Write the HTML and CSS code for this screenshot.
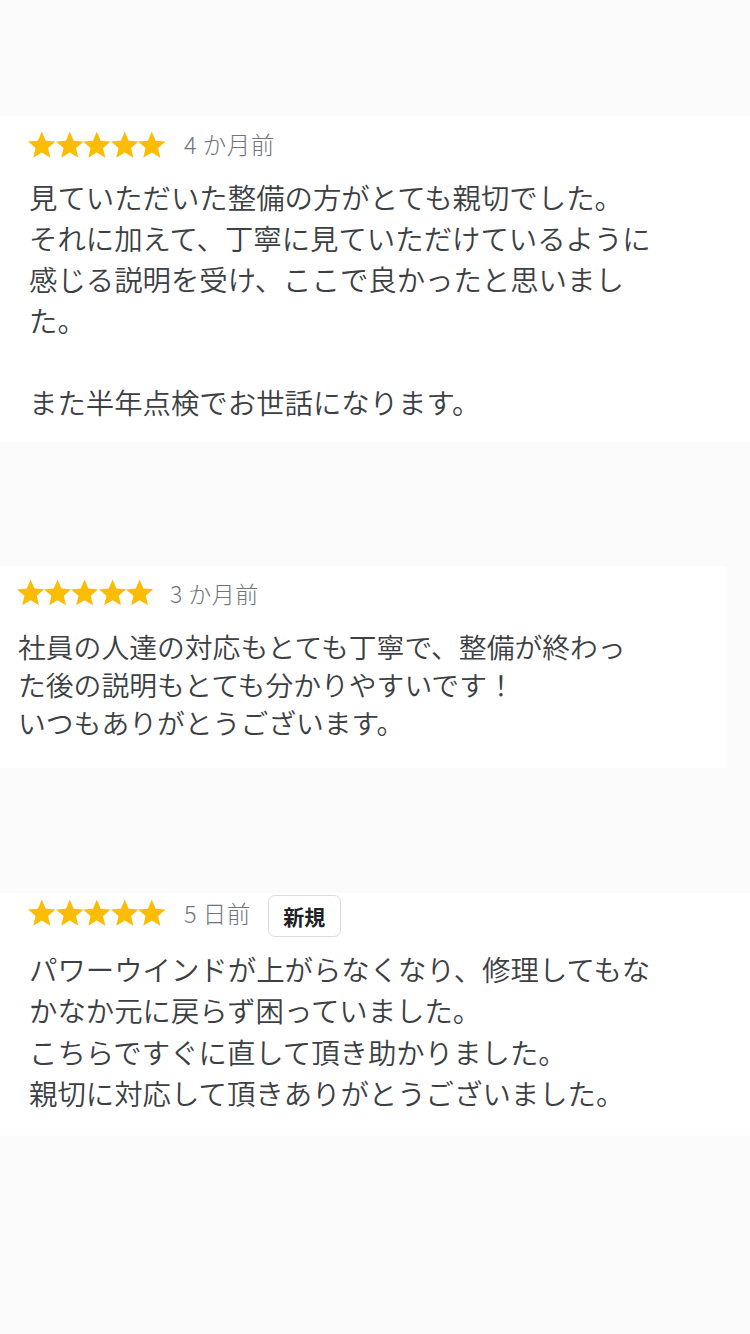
FILE: index.html
```html
<!DOCTYPE html>
<html lang="ja">
<head>
<meta charset="utf-8">
<link rel="stylesheet" href="styles.css">
</head>
<body>
<svg width="0" height="0" class="defs">
  <defs>
    <symbol id="star" viewBox="2 1.6 20 20"><path d="M12 17.27L18.18 21l-1.64-7.03L22 9.24l-7.19-.61L12 2 9.19 8.63 2 9.24l5.46 4.73L5.82 21z"/></symbol>
  </defs>
</svg>
<main class="page">
  <section class="card card-1">
    <div class="head">
      <div class="stars">
        <svg><use href="#star"/></svg><svg><use href="#star"/></svg><svg><use href="#star"/></svg><svg><use href="#star"/></svg><svg><use href="#star"/></svg>
      </div>
      <span class="date">4 か月前</span>
    </div>
    <p class="body">見ていただいた整備の方がとても親切でした。<br>それに加えて、丁寧に見ていただけているように<br>感じる説明を受け、ここで良かったと思いまし<br>た。<br><br>また半年点検でお世話になります。</p>
  </section>

  <section class="card card-2">
    <div class="head">
      <div class="stars">
        <svg><use href="#star"/></svg><svg><use href="#star"/></svg><svg><use href="#star"/></svg><svg><use href="#star"/></svg><svg><use href="#star"/></svg>
      </div>
      <span class="date">3 か月前</span>
    </div>
    <p class="body">社員の人達の対応もとても丁寧で、整備が終わっ<br>た後の説明もとても分かりやすいです！<br>いつもありがとうございます。</p>
  </section>

  <section class="card card-3">
    <div class="head">
      <div class="stars">
        <svg><use href="#star"/></svg><svg><use href="#star"/></svg><svg><use href="#star"/></svg><svg><use href="#star"/></svg><svg><use href="#star"/></svg>
      </div>
      <span class="date">5 日前</span>
      <span class="badge">新規</span>
    </div>
    <p class="body">パワーウインドが上がらなくなり、修理してもな<br>かなか元に戻らず困っていました。<br>こちらですぐに直して頂き助かりました。<br>親切に対応して頂きありがとうございました。</p>
  </section>
</main>
</body>
</html>
```

FILE: styles.css
```css
* { box-sizing: border-box; }

html, body {
  margin: 0;
  padding: 0;
  background: #fcfbfb;
}

body {
  width: 750px;
  height: 1334px;
  overflow: hidden;
  font-family: "Noto Sans CJK JP", "Noto Sans", "Liberation Sans", sans-serif;
  color: #3c4043;
}

.defs {
  position: absolute;
  width: 0;
  height: 0;
}

.page {
  display: flex;
  flex-direction: column;
  padding-top: 116px;
}

.card {
  background: #ffffff;
}

.head {
  display: flex;
  align-items: center;
  height: 30px;
}

.stars {
  display: flex;
  fill: #fbbc04;
}

.stars svg {
  width: 27.6px;
  height: 27.6px;
}

.date {
  font-size: 23.5px;
  font-weight: 300;
  color: #70757a;
  margin-left: 18px;
  line-height: 1;
  letter-spacing: 0.5px;
}

.body {
  margin: 0;
  font-size: 28.4px;
  font-weight: 350;
  line-height: 41px;
  white-space: nowrap;
  letter-spacing: 0;
}

/* card 1 */
.card-1 {
  width: 750px;
  height: 326px;
  padding: 14px 0 0 28px;
}
.card-1 .body {
  margin-top: 16px;
  margin-left: 1px;
}

/* card 2 */
.card-2 {
  width: 726px;
  height: 202px;
  margin-top: 124px;
  padding: 12px 0 0 17px;
  background: #ffffff;
}
.card-2 .stars svg {
  width: 27.2px;
  height: 27.2px;
}
.card-2 .date {
  font-size: 23px;
  margin-left: 17px;
}
.card-2 .body {
  margin-top: 19px;
  margin-left: 1px;
  font-size: 27.8px;
  line-height: 38px;
}

/* card 3 */
.card-3 {
  width: 750px;
  height: 242px;
  margin-top: 125px;
  padding: 2px 0 0 28px;
}
.card-3 .head {
  height: 42px;
}
.card-3 .stars {
  margin-top: -6px;
}
.card-3 .date {
  margin-top: -4px;
}
.card-3 .badge {
  margin-left: 17px;
  height: 42px;
  width: 73px;
  display: flex;
  align-items: center;
  justify-content: center;
  border: 1.5px solid #dadce0;
  border-radius: 7px;
  font-size: 21px;
  font-weight: 700;
  color: #202124;
}
.card-3 .body {
  margin-top: 11px;
  margin-left: 1px;
  line-height: 41.4px;
}
```
